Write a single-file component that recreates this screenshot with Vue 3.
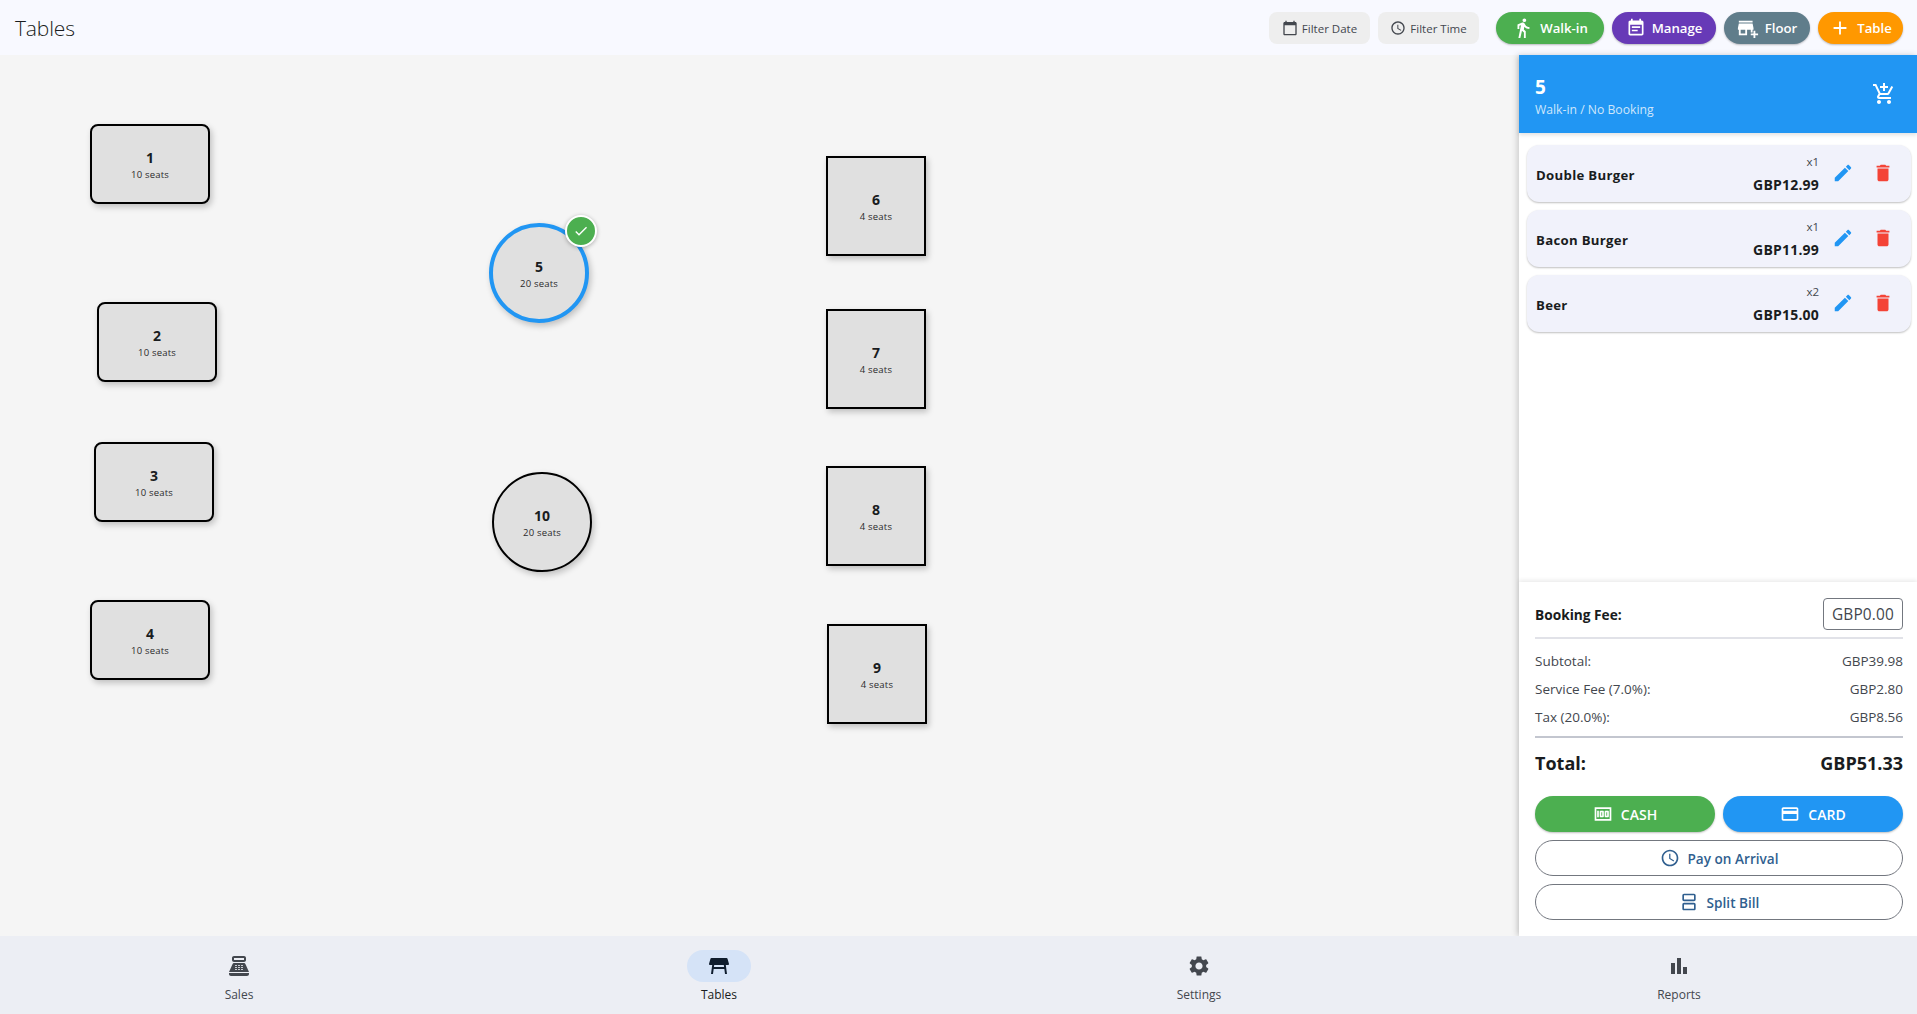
<script setup>
const squares = [
  { id: 1, seats: 10, x: 90, y: 124, kind: 'rect' },
  { id: 2, seats: 10, x: 97, y: 302, kind: 'rect' },
  { id: 3, seats: 10, x: 94, y: 442, kind: 'rect' },
  { id: 4, seats: 10, x: 90, y: 600, kind: 'rect' },
  { id: 5, seats: 20, x: 489, y: 223, kind: 'circle', selected: true },
  { id: 10, seats: 20, x: 492, y: 472, kind: 'circle' },
  { id: 6, seats: 4, x: 826, y: 156, kind: 'square' },
  { id: 7, seats: 4, x: 826, y: 309, kind: 'square' },
  { id: 8, seats: 4, x: 826, y: 466, kind: 'square' },
  { id: 9, seats: 4, x: 827, y: 624, kind: 'square' },
]
const icons = {
  cal: 'M20 3h-1V1h-2v2H7V1H5v2H4c-1.1 0-2 .9-2 2v16c0 1.1.9 2 2 2h16c1.1 0 2-.9 2-2V5c0-1.1-.9-2-2-2zm0 18H4V8h16v13z',
  clock: 'M11.99 2C6.47 2 2 6.48 2 12s4.47 10 9.99 10C17.52 22 22 17.52 22 12S17.52 2 11.99 2zM12 20c-4.42 0-8-3.58-8-8s3.58-8 8-8 8 3.58 8 8-3.58 8-8 8zm.5-13H11v6l5.25 3.15.75-1.23-4.5-2.67z',
  walk: 'M13.5 5.5c1.1 0 2-.9 2-2s-.9-2-2-2-2 .9-2 2 .9 2 2 2zM9.8 8.9L7 23h2.1l1.8-8 2.1 2v6h2v-7.5l-2.1-2 .6-3C14.8 12 16.8 13 19 13v-2c-1.9 0-3.5-1-4.3-2.4l-1-1.6c-.4-.6-1-1-1.7-1-.3 0-.5.1-.8.1L6 8.3V13h2V9.6l1.8-.7',
  manage: 'M17 10H7v2h10v-2zm2-7h-1V1h-2v2H8V1H6v2H5c-1.11 0-1.99.9-1.99 2L3 19c0 1.1.89 2 2 2h14c1.1 0 2-.9 2-2V5c0-1.1-.9-2-2-2zm0 16H5V8h14v11zm-5-5H7v2h7v-2z',
  store: 'M15 17h2v-3h1v-2l-1-5H2l-1 5v2h1v6h9v-6h4v3zm-6 1H4v-4h5v4zM2 4h15v2H2zM20 18v-3h-2v3h-3v2h3v3h2v-3h3v-2z',
  add: 'M19 13h-6v6h-2v-6H5v-2h6V5h2v6h6v2z',
  cart: 'M11 9h2V6h3V4h-3V1h-2v3H8v2h3v3zm-4 9c-1.1 0-1.99.9-1.99 2S5.9 22 7 22s2-.9 2-2-.9-2-2-2zm10 0c-1.1 0-1.99.9-1.99 2s.89 2 1.99 2 2-.9 2-2-.9-2-2-2zm-9.83-3.25l.03-.12.9-1.63h7.45c.75 0 1.41-.41 1.75-1.03l3.86-7.01L19.42 4h-.01l-1.1 2-2.76 5H8.53l-.13-.27L6.16 6l-.95-2-.94-2H1v2h2l3.6 7.59-1.35 2.45c-.16.28-.25.61-.25.96 0 1.1.9 2 2 2h12v-2H7.42c-.13 0-.25-.11-.25-.25z',
  edit: 'M3 17.25V21h3.75L17.81 9.94l-3.75-3.75L3 17.25zM20.71 7.04c.39-.39.39-1.02 0-1.41l-2.34-2.34c-.39-.39-1.02-.39-1.41 0l-1.83 1.83 3.75 3.75 1.83-1.83z',
  trash: 'M6 19c0 1.1.9 2 2 2h8c1.1 0 2-.9 2-2V7H6v12zM19 4h-3.5l-1-1h-5l-1 1H5v2h14V4z',
  money: 'M5 8h2v8H5zm7 0H9c-.55 0-1 .45-1 1v6c0 .55.45 1 1 1h3c.55 0 1-.45 1-1V9c0-.55-.45-1-1-1zm-1 6h-1v-4h1v4zm7-6h-3c-.55 0-1 .45-1 1v6c0 .55.45 1 1 1h3c.55 0 1-.45 1-1V9c0-.55-.45-1-1-1zm-1 6h-1v-4h1v4zM2 4v16h20V4H2zm2 14V6h16v12H4z',
  card: 'M20 4H4c-1.11 0-1.99.89-1.99 2L2 18c0 1.11.89 2 2 2h16c1.11 0 2-.89 2-2V6c0-1.11-.89-2-2-2zm0 14H4v-6h16v6zm0-10H4V6h16v2z',
  split: 'M18 4v5H6V4h12m0-2H6c-1.1 0-2 .9-2 2v5c0 1.1.9 2 2 2h12c1.1 0 2-.9 2-2V4c0-1.1-.9-2-2-2zm0 13v5H6v-5h12m0-2H6c-1.1 0-2 .9-2 2v5c0 1.1.9 2 2 2h12c1.1 0 2-.9 2-2v-5c0-1.1-.9-2-2-2z',
  check: 'M9 16.17L4.83 12l-1.42 1.41L9 19 21 7l-1.41-1.41z',
  pos: 'M17 2H7c-1.1 0-2 .9-2 2v2c0 1.1.9 2 2 2h10c1.1 0 2-.9 2-2V4c0-1.1-.9-2-2-2zm0 4H7V4h10v2zm3 16H4c-1.1 0-2-.9-2-2v-1h20v1c0 1.1-.9 2-2 2zm-1.47-11.81C18.21 9.47 17.49 9 16.7 9H7.3c-.79 0-1.51.47-1.83 1.19L2 18h20l-3.47-7.81zM9.5 16h-1c-.28 0-.5-.22-.5-.5s.22-.5.5-.5h1c.28 0 .5.22.5.5s-.22.5-.5.5zm0-2h-1c-.28 0-.5-.22-.5-.5s.22-.5.5-.5h1c.28 0 .5.22.5.5s-.22.5-.5.5zm0-2h-1c-.28 0-.5-.22-.5-.5s.22-.5.5-.5h1c.28 0 .5.22.5.5s-.22.5-.5.5zm3 4h-1c-.28 0-.5-.22-.5-.5s.22-.5.5-.5h1c.28 0 .5.22.5.5s-.22.5-.5.5zm0-2h-1c-.28 0-.5-.22-.5-.5s.22-.5.5-.5h1c.28 0 .5.22.5.5s-.22.5-.5.5zm0-2h-1c-.28 0-.5-.22-.5-.5s.22-.5.5-.5h1c.28 0 .5.22.5.5s-.22.5-.5.5zm3 4h-1c-.28 0-.5-.22-.5-.5s.22-.5.5-.5h1c.28 0 .5.22.5.5s-.22.5-.5.5zm0-2h-1c-.28 0-.5-.22-.5-.5s.22-.5.5-.5h1c.28 0 .5.22.5.5s-.22.5-.5.5zm0-2h-1c-.28 0-.5-.22-.5-.5s.22-.5.5-.5h1c.28 0 .5.22.5.5s-.22.5-.5.5z',
  table: 'M21.96 9.73l-1.43-5C20.41 4.3 20.02 4 19.57 4H4.43c-.45 0-.84.3-.96.73l-1.43 5C1.86 10.36 2.34 11 3 11h2.2L4 20h2l.67-5h10.67l.66 5h2l-1.2-9H21c.66 0 1.14-.64.96-1.27zM6.93 13l.27-2h9.6l.27 2H6.93z',
  gear: 'M19.14 12.94c.04-.3.06-.61.06-.94 0-.32-.02-.64-.07-.94l2.03-1.58c.18-.14.23-.41.12-.61l-1.92-3.32c-.12-.22-.37-.29-.59-.22l-2.39.96c-.5-.38-1.03-.7-1.62-.94l-.36-2.54c-.04-.24-.24-.41-.48-.41h-3.84c-.24 0-.43.17-.47.41l-.36 2.54c-.59.24-1.13.57-1.62.94l-2.39-.96c-.22-.08-.47 0-.59.22L2.74 8.87c-.12.21-.08.47.12.61l2.03 1.58c-.05.3-.09.63-.09.94s.02.64.07.94l-2.03 1.58c-.18.14-.23.41-.12.61l1.92 3.32c.12.22.37.29.59.22l2.39-.96c.5.38 1.03.7 1.62.94l.36 2.54c.05.24.24.41.48.41h3.84c.24 0 .44-.17.47-.41l.36-2.54c.59-.24 1.13-.56 1.62-.94l2.39.96c.22.08.47 0 .59-.22l1.92-3.32c.12-.22.07-.47-.12-.61l-2.01-1.58zM12 15.6c-1.98 0-3.6-1.62-3.6-3.6s1.62-3.6 3.6-3.6 3.6 1.62 3.6 3.6-1.62 3.6-3.6 3.6z',
  chart: 'M4 9h4v11H4zM10 4h4v16h-4zM16 13h4v7h-4z',
}
const actions = [
  { label: 'Walk-in', icon: 'walk', cls: 'green', w: 108, s: 'i22' },
  { label: 'Manage', icon: 'manage', cls: 'purple', w: 104, s: 'i20' },
  { label: 'Floor', icon: 'store', cls: 'slate', w: 86, s: 'i22' },
  { label: 'Table', icon: 'add', cls: 'orange', w: 85, s: 'i22' },
]
const items = [
  { name: 'Double Burger', qty: 'x1', price: 'GBP12.99' },
  { name: 'Bacon Burger', qty: 'x1', price: 'GBP11.99' },
  { name: 'Beer', qty: 'x2', price: 'GBP15.00' },
]
const fees = [
  ['Subtotal:', 'GBP39.98'],
  ['Service Fee (7.0%):', 'GBP2.80'],
  ['Tax (20.0%):', 'GBP8.56'],
]
const nav = [
  { label: 'Sales', icon: 'pos' },
  { label: 'Tables', icon: 'table', active: true },
  { label: 'Settings', icon: 'gear' },
  { label: 'Reports', icon: 'chart' },
]
</script>

<template>
  <div class="app">
    <header class="top">
      <h1 class="title">Tables</h1>
      <div class="filters">
        <button class="filter"><svg viewBox="0 0 24 24" class="i16"><path :d="icons.cal" /></svg><span class="ftext">Filter Date</span></button>
        <button class="filter"><svg viewBox="0 0 24 24" class="i16"><path :d="icons.clock" /></svg><span class="ftext">Filter Time</span></button>
      </div>
      <div class="actions">
        <button v-for="a in actions" :key="a.label" class="action" :class="a.cls" :style="{ width: a.w + 'px' }">
          <svg viewBox="0 0 24 24" :class="a.s"><path :d="icons[a.icon]" /></svg>{{ a.label }}
        </button>
      </div>
    </header>

    <div class="middle">
      <main class="canvas">
        <div
          v-for="t in squares"
          :key="t.id"
          class="tbl"
          :class="[t.kind, { selected: t.selected }]"
          :style="{ left: t.x + 'px', top: t.y - 55 + 'px' }"
        >
          <span class="tid">{{ t.id }}</span>
          <span class="seats">{{ t.seats }} seats</span>
          <span v-if="t.selected" class="badge"><svg viewBox="0 0 24 24" class="i16"><path :d="icons.check" /></svg></span>
        </div>
      </main>

      <aside class="side">
        <div class="side-head">
          <div class="side-text">
            <div class="side-id">5</div>
            <div class="side-sub">Walk-in / No Booking</div>
          </div>
          <svg viewBox="0 0 24 24" class="i24 cart"><path :d="icons.cart" /></svg>
        </div>

        <div class="items">
          <div v-for="it in items" :key="it.name" class="item">
            <span class="iname">{{ it.name }}</span>
            <div class="iprice">
              <span class="qty">{{ it.qty }}</span>
              <span class="price">{{ it.price }}</span>
            </div>
            <svg viewBox="0 0 24 24" class="i22 edit"><path :d="icons.edit" /></svg>
            <svg viewBox="0 0 24 24" class="i22 trash"><path :d="icons.trash" /></svg>
          </div>
        </div>

        <div class="summary">
          <div class="booking">
            <span class="blabel">Booking Fee:</span>
            <div class="binput">GBP0.00</div>
          </div>
          <div class="fees">
            <div v-for="f in fees" :key="f[0]" class="fee"><span>{{ f[0] }}</span><span>{{ f[1] }}</span></div>
          </div>
          <div class="total"><span>Total:</span><span>GBP51.33</span></div>
          <div class="pay">
            <button class="paybtn cash"><svg viewBox="0 0 24 24" class="i20"><path :d="icons.money" fill-rule="evenodd" /></svg>CASH</button>
            <button class="paybtn cardb"><svg viewBox="0 0 24 24" class="i20"><path :d="icons.card" /></svg>CARD</button>
          </div>
          <button class="outline"><svg viewBox="0 0 24 24" class="i20"><path :d="icons.clock" /></svg>Pay on Arrival</button>
          <button class="outline"><svg viewBox="0 0 24 24" class="i20"><path :d="icons.split" /></svg>Split Bill</button>
        </div>
      </aside>
    </div>

    <nav class="nav">
      <div v-for="n in nav" :key="n.label" class="navitem" :class="{ active: n.active }">
        <span class="pill"><svg viewBox="0 0 24 24" class="i24"><path :d="icons[n.icon]" /></svg></span>
        <span class="navlabel">{{ n.label }}</span>
      </div>
    </nav>
  </div>
</template>

<style>
html, body { margin: 0; padding: 0; }
</style>

<style scoped>
.app {
  width: 1917px;
  height: 1014px;
  display: flex;
  flex-direction: column;
  overflow: hidden;
  font-family: "Open Sans", "Noto Sans", sans-serif;
  color: #191c20;
}
svg { fill: currentColor; flex: none; display: block; }
.i16 { width: 16px; height: 16px; }
.i20 { width: 20px; height: 20px; }
.i22 { width: 22px; height: 22px; }
.i24 { width: 24px; height: 24px; }
button { font-family: inherit; border: 0; cursor: pointer; padding: 0; }

.top {
  height: 55px;
  flex: none;
  background: #f8f9ff;
  display: flex;
  align-items: center;
  padding: 0 14px 0 15px;
  box-sizing: border-box;
}
.title { margin: 0; font-size: 21px; font-weight: 300; flex: 1; color: #191c20; letter-spacing: -.15px; }
.filters { display: flex; gap: 8px; margin-right: 17px; }
.filter {
  height: 32px;
  width: 101px;
  display: flex;
  align-items: center;
  justify-content: center;
  gap: 4px;
  background: #eeeeee;
  border-radius: 8px;
  font-size: 11.5px;
  color: #43474e;
}
.ftext { margin-top: 2px; }
.actions { display: flex; gap: 8px; }
.action {
  height: 32px;
  display: flex;
  align-items: center;
  justify-content: center;
  gap: 6px;
  border-radius: 16px;
  color: #fff;
  font-size: 13.2px;
  font-weight: 600;
  box-shadow: 0 1px 2px rgba(0,0,0,.25);
}
.green { background: #4caf50; }
.purple { background: #673ab7; }
.slate { background: #607d8b; }
.orange { background: #ff9800; }

.middle { flex: 1; min-height: 0; display: flex; }
.canvas { flex: 1; position: relative; background: #f5f5f5; }
.tbl {
  position: absolute;
  box-sizing: border-box;
  background: #e0e0e0;
  border: 2px solid #000;
  padding-top: 2px;
  display: flex;
  flex-direction: column;
  align-items: center;
  justify-content: center;
  box-shadow: 2px 3px 6px rgba(0,0,0,.22);
}
.rect { width: 120px; height: 80px; border-radius: 8px; }
.square { width: 100px; height: 100px; }
.circle { width: 100px; height: 100px; border-radius: 50%; }
.selected { border: 4px solid #2196f3; }
.tid { font-size: 14px; font-weight: 700; line-height: 19px; }
.seats { font-size: 9.5px; line-height: 14px; margin-top: 1px; color: #2b2b2b; letter-spacing: .2px; }
.badge {
  position: absolute;
  top: -12px;
  right: -12px;
  width: 28px;
  height: 28px;
  border: 2px solid #fff;
  border-radius: 50%;
  background: #4caf50;
  color: #fff;
  display: flex;
  align-items: center;
  justify-content: center;
  box-shadow: 0 1px 4px rgba(0,0,0,.3);
}

.side {
  width: 398px;
  flex: none;
  background: #fff;
  display: flex;
  flex-direction: column;
  box-shadow: -2px 0 6px rgba(0,0,0,.16);
  position: relative;
}
.side-head {
  height: 78px;
  flex: none;
  background: #2196f3;
  color: #fff;
  display: flex;
  align-items: center;
  justify-content: space-between;
  padding: 0 21px 0 16px;
  box-shadow: 0 2px 4px rgba(0,0,0,.12);
}
.side-text { padding-top: 6px; }
.side-id { font-size: 19px; font-weight: 700; line-height: 24px; }
.side-sub { font-size: 12.2px; line-height: 18px; color: #cfe6fb; margin-top: 2px; }
.items { flex: 1; padding: 12px 6px 0 8px; display: flex; flex-direction: column; gap: 8px; }
.item {
  height: 57px;
  box-sizing: border-box;
  background: #f1f2fb;
  border-radius: 12px;
  display: flex;
  align-items: center;
  padding: 0 17px 0 9px;
  box-shadow: 0 1px 2px rgba(0,0,0,.25);
}
.iname { flex: 1; font-size: 13.2px; font-weight: 700; letter-spacing: .3px; margin-top: 2px; }
.iprice { display: flex; flex-direction: column; align-items: flex-end; margin-right: 13px; }
.qty { font-size: 11.5px; line-height: 17px; color: #43474e; }
.price { font-size: 14px; font-weight: 700; line-height: 19px; margin-top: 5px; letter-spacing: .2px; }
.edit { color: #2196f3; margin-right: 18px; margin-top: -2px; }
.trash { color: #f44336; margin-top: -2px; }

.summary {
  flex: none;
  height: 354px;
  box-sizing: border-box;
  padding: 17px 14px 0 16px;
  background: #fff;
  box-shadow: 0 -2px 4px rgba(0,0,0,.08);
  display: flex;
  flex-direction: column;
}
.booking {
  display: flex;
  align-items: center;
  justify-content: space-between;
  height: 40px;
  box-sizing: border-box;
  padding-bottom: 8px;
  border-bottom: 2px solid #e1e2e8;
}
.blabel { font-size: 13.7px; font-weight: 700; margin-top: 1px; }
.binput {
  width: 80px;
  height: 32px;
  box-sizing: border-box;
  border: 1px solid #73777f;
  border-radius: 4px;
  font-size: 15.4px;
  font-weight: 400;
  letter-spacing: .2px;
  display: flex;
  align-items: center;
  justify-content: center;
  color: #43474e;
}
.fees {
  padding: 8px 0 5px;
  border-bottom: 2px solid #c3c6cf;
  display: flex;
  flex-direction: column;
}
.fee {
  height: 28px;
  display: flex;
  align-items: center;
  justify-content: space-between;
  font-size: 13.5px;
  color: #43474e;
}
.total {
  display: flex;
  justify-content: space-between;
  align-items: center;
  height: 50px;
  font-size: 18px;
  font-weight: 700;
}
.pay { display: flex; gap: 8px; margin-top: 8px; }
.paybtn {
  flex: 1;
  height: 36px;
  border-radius: 18px;
  color: #fff;
  display: flex;
  align-items: center;
  justify-content: center;
  gap: 8px;
  font-size: 14px;
  font-weight: 600;
  box-shadow: 0 1px 2px rgba(0,0,0,.25);
}
.cash { background: #4caf50; }
.cardb { background: #2196f3; }
.outline {
  margin-top: 8px;
  height: 36px;
  box-sizing: border-box;
  background: #fff;
  border: 1px solid #73777f;
  border-radius: 18px;
  color: #305f8f;
  display: flex;
  align-items: center;
  justify-content: center;
  gap: 8px;
  font-size: 13.6px;
  font-weight: 600;
}

.nav {
  height: 78px;
  flex: none;
  background: #eceef4;
  display: grid;
  grid-template-columns: repeat(4, 480px);
  justify-content: center;
  padding-left: 1px;
  position: relative;
}
.navitem {
  display: flex;
  flex-direction: column;
  align-items: center;
  padding-top: 14px;
  color: #43474e;
}
.pill {
  width: 64px;
  height: 32px;
  border-radius: 16px;
  display: flex;
  align-items: center;
  justify-content: center;
}
.active .pill { background: #d5e3f7; color: #0f1d2e; }
.navlabel { font-size: 12px; font-weight: 500; line-height: 16px; margin-top: 5px; }
.active .navlabel { color: #191c20; }
</style>
